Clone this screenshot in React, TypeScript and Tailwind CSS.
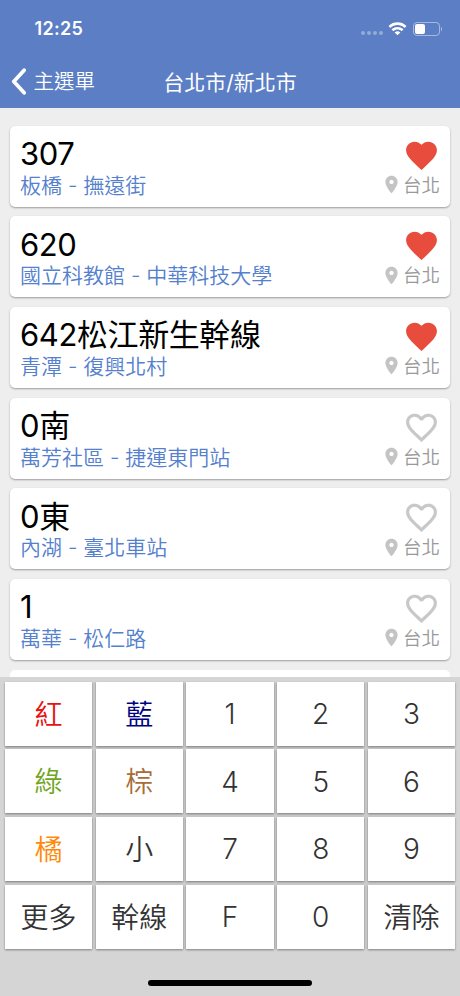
import clsx from "clsx";

type Route = {
  name: string;
  path: string;
  city: string;
  favorite: boolean;
};

const routes: Route[] = [
  { name: "307", path: "板橋 - 撫遠街", city: "台北", favorite: true },
  { name: "620", path: "國立科教館 - 中華科技大學", city: "台北", favorite: true },
  { name: "642松江新生幹線", path: "青潭 - 復興北村", city: "台北", favorite: true },
  { name: "0南", path: "萬芳社區 - 捷運東門站", city: "台北", favorite: false },
  { name: "0東", path: "內湖 - 臺北車站", city: "台北", favorite: false },
  { name: "1", path: "萬華 - 松仁路", city: "台北", favorite: false },
];

const keys = [
  { label: "紅", color: "text-[#e81010]" },
  { label: "藍", color: "text-[#000080]" },
  { label: "1" },
  { label: "2" },
  { label: "3" },
  { label: "綠", color: "text-[#6fa522]" },
  { label: "棕", color: "text-[#a86c38]" },
  { label: "4" },
  { label: "5" },
  { label: "6" },
  { label: "橘", color: "text-[#ff8a0a]" },
  { label: "小" },
  { label: "7" },
  { label: "8" },
  { label: "9" },
  { label: "更多" },
  { label: "幹線" },
  { label: "F" },
  { label: "0" },
  { label: "清除" },
];

function Heart({ filled }: { filled: boolean }) {
  return (
    <svg
      viewBox="0 0 24 24"
      className={clsx(
        "size-[37px]",
        filled ? "fill-[#e74c3c]" : "fill-[#c8c8c8] stroke-[#c8c8c8] stroke-[0.1]"
      )}
    >
      {filled ? (
        <path d="M12 21.35l-1.45-1.32C5.4 15.36 2 12.28 2 8.5 2 5.42 4.42 3 7.5 3c1.74 0 3.41.81 4.5 2.09C13.09 3.81 14.76 3 16.5 3 19.58 3 22 5.42 22 8.5c0 3.78-3.4 6.86-8.55 11.54L12 21.35z" />
      ) : (
        <path d="M16.5 3c-1.74 0-3.41.81-4.5 2.09C10.91 3.81 9.24 3 7.5 3 4.42 3 2 5.42 2 8.5c0 3.78 3.4 6.86 8.55 11.54L12 21.35l1.45-1.32C18.6 15.36 22 12.28 22 8.5 22 5.42 19.58 3 16.5 3zm-4.4 15.55l-.1.1-.1-.1C7.14 14.24 4 11.39 4 8.5 4 6.5 5.5 5 7.5 5c1.54 0 3.04.99 3.57 2.36h1.87C13.46 5.99 14.96 5 16.5 5c2 0 3.5 1.5 3.5 3.5 0 2.89-3.14 5.74-7.9 10.05z" />
      )}
    </svg>
  );
}

function StatusBar() {
  return (
    <div className="flex h-[55px] items-center justify-between pr-[18px] pl-[34.5px] pt-[2px]">
      <span className="text-[18px] font-semibold tracking-[0.3px]">12:25</span>
      <div className="flex items-center">
        <div className="mt-[9px] flex gap-[2px]">
          {[0, 1, 2, 3].map((dot) => (
            <span key={dot} className="size-[4px] rounded-full bg-white/35" />
          ))}
        </div>
        <svg viewBox="0 0 18 13" className="ml-[5px] h-[14px] w-[19px] fill-white">
          <path d="M9 2.7c2.4 0 4.7.9 6.5 2.6.1.1.3.1.5 0l1.3-1.3c.1-.2.1-.4 0-.5C12.7-.9 5.3-.9.7 3.5c-.1.1-.1.3 0 .5L2 5.300c.2.1.4.1.5 0C4.300 3.600 6.600 2.700 9 2.700z" />
          <path d="M9 7c1.300 0 2.600.5 3.600 1.400.2.1.4.1.5 0l1.300-1.300c.1-.2.1-.4 0-.5C11.400 3.800 6.600 3.800 3.600 6.600c-.1.1-.1.3 0 .5l1.300 1.300c.1.1.3.1.5 0C6.400 7.500 7.700 7 9 7z" />
          <path d="M11.500 10c.2-.2.2-.4 0-.5-1.400-1.200-3.600-1.200-5 0-.2.1-.2.3 0 .5l2.300 2.300c.1.1.3.1.4 0z" />
        </svg>
        <div className="ml-[6px] flex h-[14px] w-[27px] rounded-[4px] border border-white/45 p-[1px]">
          <span className="w-[10px] rounded-[2px] bg-white" />
        </div>
        <span className="ml-[1px] h-[4px] w-[1.5px] rounded-r-full bg-white/45" />
      </div>
    </div>
  );
}

function RouteCard({ route }: { route: Route }) {
  return (
    <div className="flex h-[81px] shrink-0 justify-between rounded-[5px] bg-white px-[10px] shadow-[0_1px_2px_rgba(0,0,0,0.35)]">
      <div className="pt-[9.5px]">
        <div className="h-[37.5px] text-[31px] leading-[38px] font-[399] tracking-[-0.4px] text-black">
          {route.name}
        </div>
        <div className="h-[25px] text-[21px] leading-[25px] font-[350] text-[#5480cd]">
          {route.path}
        </div>
      </div>
      <div className="flex flex-col items-end pt-[11px]">
        <Heart filled={route.favorite} />
        <div className="flex h-[22px] items-center text-[18.5px] leading-[22px] font-[350] text-[#999999]">
          <svg viewBox="0 0 24 24" className="mr-[1px] size-[21px] fill-[#c4c4c4]">
            <path d="M12 2C8.13 2 5 5.13 5 9c0 5.25 7 13 7 13s7-7.75 7-13c0-3.87-3.13-7-7-7zm0 9.5c-1.38 0-2.5-1.12-2.5-2.5s1.12-2.5 2.5-2.5 2.5 1.12 2.5 2.5-1.12 2.5-2.5 2.5z" />
          </svg>
          {route.city}
        </div>
      </div>
    </div>
  );
}

export default function App() {
  return (
    <div className="flex h-[996px] w-[460px] flex-col overflow-hidden bg-[#eeeeee] font-['Inter','Noto_Sans_CJK_TC',sans-serif]">
      <header className="h-[108px] shrink-0 bg-[#5b7ec5] text-white">
        <StatusBar />
        <div className="grid h-[53px] grid-cols-[1fr_auto_1fr] items-center">
          <button className="flex items-center pl-[10.5px] text-[20.5px] font-[350]">
            <svg viewBox="0 0 16 28" className="mr-[8px] h-[27px] w-[15px] fill-none stroke-white stroke-[4]">
              <path d="M14 2L3 14l11 12" strokeLinecap="round" strokeLinejoin="round" />
            </svg>
            <span className="pt-[2px]">主選單</span>
          </button>
          <h1 className="pt-[2px] text-[21px] font-normal">台北市/新北市</h1>
        </div>
      </header>

      <main className="flex h-[568.5px] shrink-0 flex-col gap-[9.7px] overflow-hidden px-[10px] pt-[17.5px]">
        {routes.map((route) => (
          <RouteCard key={route.name} route={route} />
        ))}
        <div className="h-[81px] shrink-0 rounded-[5px] bg-white" />
      </main>

      <section className="flex flex-1 flex-col bg-[#d5d5d5] px-[5px] pt-[5px]">
        <div className="grid grid-cols-5 gap-[3.5px] bg-[#cccccc]">
          {keys.map((key) => (
            <button
              key={key.label}
              className={clsx(
                "h-[64.2px] bg-white text-[28px] shadow-[0_1px_2px_rgba(0,0,0,0.4)]",
                key.color ?? "text-[#333333]",
                /^[0-9F]$/.test(key.label) ? "pt-[1px] font-light" : "pt-[2px] font-[350]"
              )}
            >
              {key.label}
            </button>
          ))}
        </div>
        <div className="mt-auto mb-[10px] h-[6px] w-[164px] self-center rounded-full bg-black" />
      </section>
    </div>
  );
}
